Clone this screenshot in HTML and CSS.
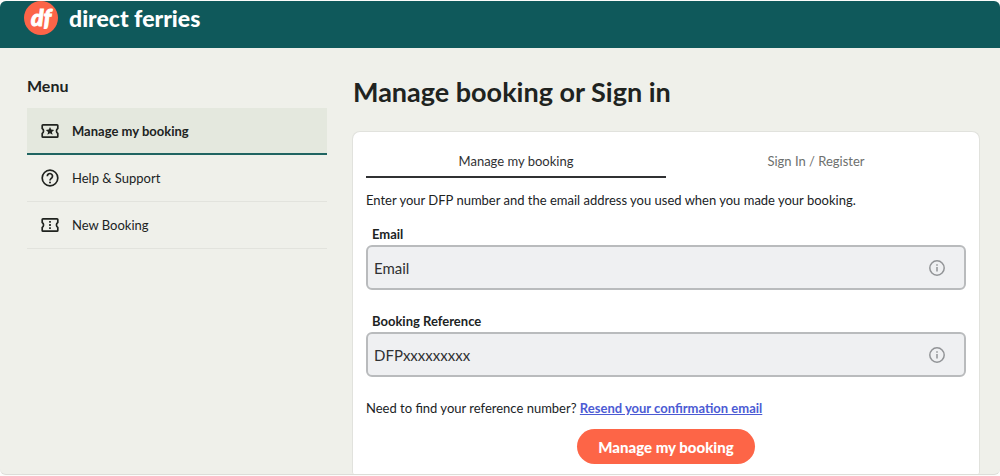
FILE: index.html
```
<!DOCTYPE html>
<html lang="en">
<head>
    <meta charset="UTF-8">
    <meta name="viewport" content="width=device-width, initial-scale=1.0">
    <title>Manage booking | Direct Ferries</title>
    <link rel="stylesheet" href="styles.css">
</head>
<body>
    <div class="page">
        <header class="site-header">
            <a href="#" class="brand">
                <span class="brand-mark">df</span>
                <span class="brand-name">direct ferries</span>
            </a>
        </header>

        <div class="layout">
            <aside class="sidebar">
                <h2>Menu</h2>
                <nav>
                    <a href="#" class="menu-item active">
                        <svg viewBox="0 0 18 16" width="18" height="16" fill="none" stroke="currentColor" stroke-width="1.700" stroke-linejoin="round">
                            <path d="M2 1.800h14q.8 0 .8.800v3a2.800 2.800 0 0 0 0 4.800v3q0 .8-.8.800H2q-.8 0-.8-.8v-3a2.800 2.800 0 0 0 0-4.800v-3q0-.8.8-.8z"/>
                            <path d="M9 3.900l1.200 2.700 3 .3-2.300 2 .7 2.900L9 10.200l-2.600 1.600.7-2.900-2.300-2 3-.3z" fill="currentColor" stroke="none"/>
                        </svg>
                        Manage my booking
                    </a>
                    <a href="#" class="menu-item">
                        <svg viewBox="0 0 18 18" width="18" height="18" fill="none" stroke="currentColor" stroke-width="1.700">
                            <circle cx="9" cy="9" r="7.800"/>
                            <path d="M6.300 7.200a2.600 2.600 0 1 1 4.500 1.700C9.800 9.900 9 10.300 9 11.600"/>
                            <circle cx="9" cy="13.500" r="1" fill="currentColor" stroke="none"/>
                        </svg>
                        Help &amp; Support
                    </a>
                    <a href="#" class="menu-item">
                        <svg viewBox="0 0 18 16" width="18" height="16" fill="none" stroke="currentColor" stroke-width="1.700" stroke-linejoin="round">
                            <path d="M2 1.800h14q.8 0 .8.800v3a2.800 2.800 0 0 0 0 4.800v3q0 .8-.8.800H2q-.8 0-.8-.8v-3a2.800 2.800 0 0 0 0-4.800v-3q0-.8.8-.8z"/>
                            <path d="M9 4v8" stroke-dasharray="1.800 1.300"/>
                        </svg>
                        New Booking
                    </a>
                </nav>
            </aside>

            <main class="content">
                <h1>Manage booking or Sign in</h1>

                <form class="card">
                    <div class="tabs">
                        <button type="button" class="tab active">Manage my booking</button>
                        <button type="button" class="tab">Sign In / Register</button>
                    </div>

                    <p class="intro">Enter your DFP number and the email address you used when you made your booking.</p>

                    <div class="field">
                        <label for="email">Email</label>
                        <div class="input-box">
                            <input type="email" id="email" placeholder="Email">
                            <svg viewBox="0 0 16 16" width="16" height="16" fill="none" stroke="currentColor" stroke-width="1.500">
                                <circle cx="8" cy="8" r="7.200"/>
                                <path d="M8 7v4.500M8 4.300v1.500"/>
                            </svg>
                        </div>
                    </div>

                    <div class="field">
                        <label for="reference">Booking Reference</label>
                        <div class="input-box">
                            <input type="text" id="reference" placeholder="DFPxxxxxxxxx">
                            <svg viewBox="0 0 16 16" width="16" height="16" fill="none" stroke="currentColor" stroke-width="1.500">
                                <circle cx="8" cy="8" r="7.200"/>
                                <path d="M8 7v4.500M8 4.300v1.500"/>
                            </svg>
                        </div>
                    </div>

                    <p class="resend">Need to find your reference number? <a href="#">Resend your confirmation email</a></p>

                    <button type="submit" class="btn-submit">Manage my booking</button>
                </form>
            </main>
        </div>
    </div>
</body>
</html>
```

FILE: styles.css
```
* {
    box-sizing: border-box;
}

body {
    margin: 0;
    padding: 1px 0;
    background: #fcfcfb;
    color: #20231f;
    font-family: Lato, "Open Sans", sans-serif;
    font-size: 13px;
    line-height: 20px;
}

h1, h2, p {
    margin: 0;
}

button, input {
    font: inherit;
    color: inherit;
}

.page {
    background: #eff0ea;
    border-bottom: 1px solid #dcddd8;
    border-radius: 6px;
    overflow: hidden;
}

/* Header */
.site-header {
    height: 47px;
    padding: 0 24px;
    background: #0f595b;
}

.brand {
    display: inline-flex;
    align-items: center;
    gap: 11px;
    color: #fff;
    text-decoration: none;
}

.brand-mark {
    width: 34px;
    height: 34px;
    border-radius: 50%;
    background: #fc6448;
    font-size: 23px;
    font-style: italic;
    font-weight: 900;
    line-height: 32px;
    text-align: center;
    -webkit-text-stroke: 1px #fff;
}

.brand-name {
    font-size: 23px;
    font-weight: 900;
}

.layout {
    display: grid;
    grid-template-columns: 300px 1fr;
    gap: 25px;
    padding: 28px 20px 0 27px;
}

/* Sidebar menu */
.sidebar h2 {
    margin-bottom: 12px;
    font-size: 16px;
    font-weight: 700;
}

.menu-item {
    display: flex;
    align-items: center;
    gap: 13px;
    height: 47px;
    padding: 0 14px;
    border-bottom: 1px solid #e2e3dd;
    color: inherit;
    text-decoration: none;
}

.menu-item svg {
    flex: none;
}

.menu-item.active {
    background: #e4e8de;
    border-bottom: 2px solid #1f6461;
    font-weight: 700;
}

/* Main card */
.content h1 {
    margin-bottom: 23px;
    padding-left: 1px;
    font-size: 27px;
    font-weight: 700;
    line-height: 32px;
}

.card {
    padding: 13px 13px 10px;
    background: #fff;
    border: 1px solid #e1e2dd;
    border-bottom: 0;
    border-radius: 8px 8px 2px 2px;
}

.tabs {
    display: grid;
    grid-template-columns: 1fr 1fr;
}

.tab {
    height: 33px;
    padding: 0;
    background: none;
    border: 0;
    border-bottom: 2px solid transparent;
    color: #6d706e;
}

.tab.active {
    border-color: #303133;
    color: #303133;
}

.intro {
    margin: 12px 0 14px;
}

.field {
    margin-bottom: 21px;
}

.field label {
    display: block;
    margin-bottom: 1px;
    padding-left: 6px;
    font-weight: 700;
}

.input-box {
    display: flex;
    align-items: center;
    height: 45px;
    padding: 0 19px 0 6px;
    background: #eff0f2;
    border: 2px solid #b9bbbd;
    border-radius: 6px;
    color: #929497;
}

.input-box input {
    flex: 1;
    min-width: 0;
    padding: 0;
    background: none;
    border: 0;
    outline: none;
    color: #303133;
    font-size: 15px;
}

.input-box input::placeholder {
    color: #303133;
    opacity: 1;
}

.resend a {
    color: #4c5bd4;
    font-weight: 700;
}

.btn-submit {
    display: block;
    height: 35px;
    margin: 11px auto 0;
    padding: 0 21px;
    background: #fd6547;
    border: 0;
    border-radius: 18px;
    color: #fff;
    font-size: 15px;
    font-weight: 900;
}
```
